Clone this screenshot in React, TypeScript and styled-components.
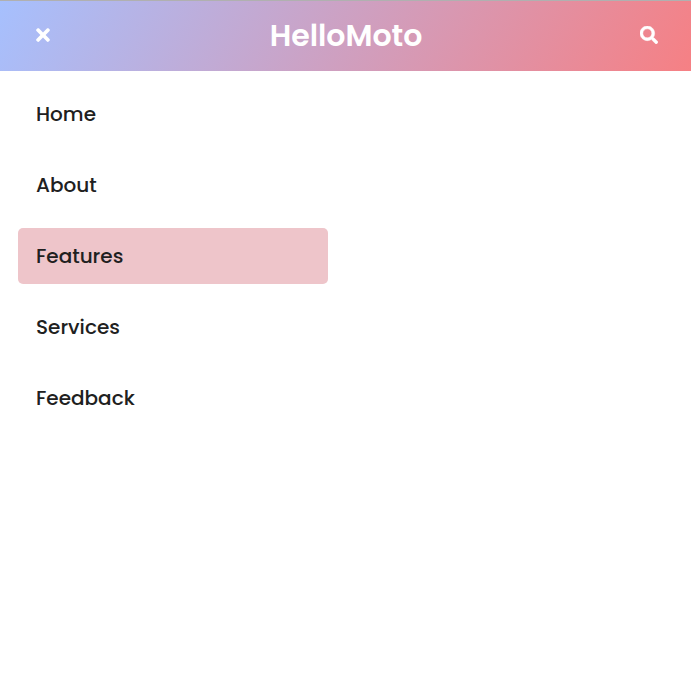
import React from "react";
import styled, { createGlobalStyle } from "styled-components";
import { FaTimes, FaSearch } from "react-icons/fa";

const GlobalStyle = createGlobalStyle`
  * { box-sizing: border-box; }
  body { margin: 0; background: #fff; font-family: Poppins, Inter, sans-serif; }
`;

const Page = styled.div`
  min-height: 696px;
  background: #fff;
`;

const Header = styled.header`
  height: 71px;
  border-top: 1px solid #b0b0b0;
  padding: 0 33px 1px;
  display: grid;
  grid-template-columns: 1fr auto 1fr;
  align-items: center;
  color: #fff;
  background: linear-gradient(120deg, #a6c0fe 0%, #f68084 100%);
`;

const Brand = styled.a`
  margin-left: 1px;
  color: #fff;
  font-size: 30px;
  line-height: 41px;
  font-weight: 600;
  text-decoration: none;
`;

const IconButton = styled.button<{ $align: "start" | "end"; $size: number; $stroke: number }>`
  justify-self: ${({ $align }) => $align};
  display: flex;
  margin-bottom: 1px;
  padding: 0;
  border: 0;
  background: none;
  color: inherit;
  font-size: ${({ $size }) => $size}px;

  path {
    stroke: currentColor;
    stroke-width: ${({ $stroke }) => $stroke}px;
  }
`;

const Menu = styled.ul`
  list-style: none;
  margin: 0;
  padding: 15px 18px;
  width: 346px;
  display: flex;
  flex-direction: column;
  gap: 15px;
`;

const MenuLink = styled.a<{ $active: boolean }>`
  display: flex;
  align-items: center;
  height: 56px;
  padding: 0 18px;
  border-radius: 5px;
  color: #202020;
  background: ${({ $active }) => ($active ? "#eec5ca" : "transparent")};
  font-size: 20px;
  font-weight: 500;
  text-decoration: none;
`;

const items = ["Home", "About", "Features", "Services", "Feedback"];

export default function App() {
  return (
    <Page>
      <GlobalStyle />
      <Header>
        <IconButton $align="start" $size={20} $stroke={0} aria-label="Close menu"><FaTimes /></IconButton>
        <Brand href="#">HelloMoto</Brand>
        <IconButton $align="end" $size={18} $stroke={14} aria-label="Search"><FaSearch /></IconButton>
      </Header>
      <nav>
        <Menu>
          {items.map((item) => (
            <li key={item}>
              <MenuLink href="#" $active={item === "Features"}>{item}</MenuLink>
            </li>
          ))}
        </Menu>
      </nav>
    </Page>
  );
}
